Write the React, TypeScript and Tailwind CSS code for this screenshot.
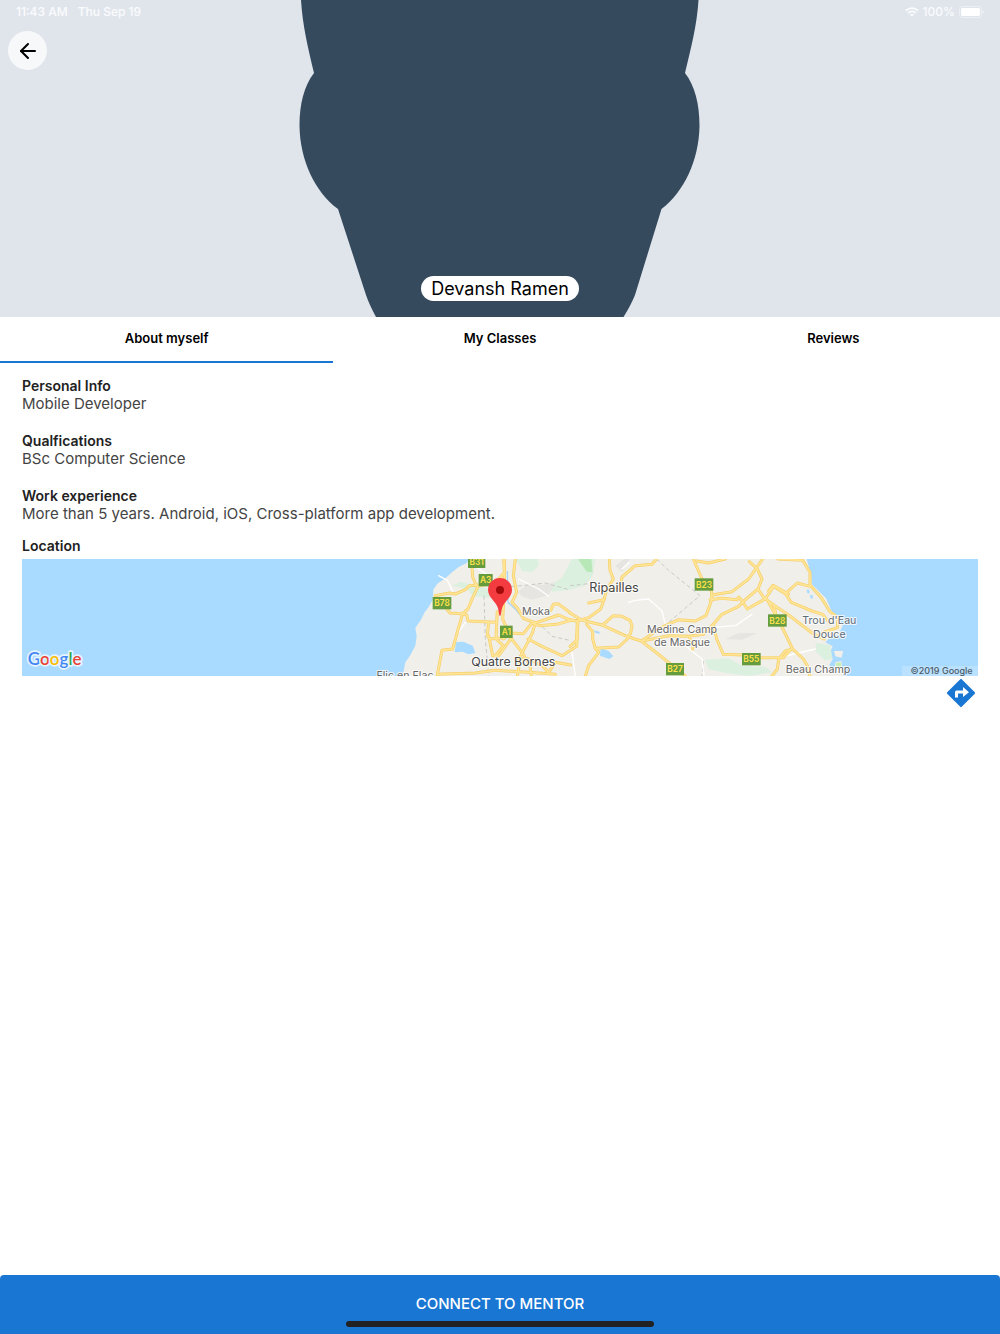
import { useState } from 'react';
import { ArrowLeft } from 'lucide-react';

const TABS = ['About myself', 'My Classes', 'Reviews'];

const INFO = [
    { title: 'Personal Info', text: 'Mobile Developer' },
    { title: 'Qualfications', text: 'BSc Computer Science' },
    { title: 'Work experience', text: 'More than 5 years. Android, iOS, Cross-platform app development.' },
];

// Map coordinates are three units to the pixel
const ROADS = [
    // west coast
    'M1350 24 L1352 54 L1362 78 L1368 82 L1412 71 L1428 62 L1448 40 L1446 0',
    'M1240 110 L1282 102 L1300 105 L1330 92 L1342 80 L1368 78',
    'M1256 128 L1284 162 L1322 164 L1338 150 L1352 116 L1368 82',
    'M1322 164 L1334 168 L1338 186 L1424 190 L1426 158',
    'M1322 164 L1308 212 L1292 270 L1260 274 L1246 348',
    'M1400 190 L1396 230 L1404 240 L1444 236',
    'M1400 230 L1412 290 L1430 290 L1466 240',
    'M1446 0 L1448 80 L1442 180 L1466 236 L1500 280 L1524 320 L1528 351',
    'M1424 190 L1422 240 L1444 260 L1420 290',
    'M1480 0 L1474 50 L1484 100 L1470 130 L1488 150 L1504 178 L1540 192 L1610 168 L1646 184 L1670 186',
    'M1444 240 L1466 222 L1504 224 L1530 192 L1552 200 L1604 196 L1646 184',
    'M1540 190 L1532 220 L1514 256 L1496 290 L1486 351',
    'M1480 300 L1520 300 L1560 320 L1580 340 L1600 310 L1646 318',
    'M1586 154 L1594 136 L1608 134 L1646 162',
    'M1518 240 L1560 262 L1620 290 L1664 262 L1668 186',
    'M1246 346 L1360 342 L1420 334 L1520 340 L1600 346',
    // centre
    'M1762 0 L1764 34 L1774 60 L1754 92 L1746 122 L1700 132',
    'M1904 0 L1890 16 L1840 20 L1800 54 L1796 84 L1766 94',
    'M1746 122 L1736 150 L1700 176 L1664 186 L1644 182',
    'M1644 162 L1680 184 L1740 198 L1770 212 L1810 230 L1838 240 L1858 246 L1912 288 L1990 351',
    'M1742 198 L1774 170 L1800 172 L1824 184 L1830 200 L1826 222 L1816 240 L1790 264 L1720 268 L1712 240 L1712 218 L1694 196',
    'M1666 186 L1664 244 L1644 262',
    'M1720 268 L1730 280 L1700 320 L1690 351',
    'M1864 242 L1920 204 L1970 182 L2020 186 L2052 170 L2070 120 L2068 96 L2040 60 L2014 0',
    'M1860 246 L1940 230 L2000 232 L2044 226 L2074 196 L2100 166 L2150 142 L2170 122 L2208 90 L2220 60 L2206 30 L2182 8',
    'M2070 108 L2130 98 L2180 60 L2204 26 L2222 0',
    'M2024 6 L2060 12 L2110 0',
    'M2064 122 L2100 118 L2146 122 L2150 114 L2160 126 L2176 150 L2204 134 L2230 120 L2256 80 L2300 106',
    'M2208 90 L2224 114 L2256 140 L2262 170',
    'M2074 196 L2084 240 L2104 286 L2164 288 L2200 296 L2284 296 L2300 278 L2308 270',
    'M2002 236 L2014 256 L2012 270',
    // east coast
    'M2268 0 L2342 4 L2364 40 L2364 78 L2398 116 L2424 158 L2448 176 L2446 206 L2400 222',
    'M2364 82 L2326 72 L2290 104 L2252 80 L2240 96',
    'M2290 104 L2308 130 L2370 156 L2402 166 L2424 194',
    'M2240 128 L2300 168 L2370 222 L2406 240',
    'M2240 130 L2280 204 L2312 270 L2344 300 L2356 320 L2364 351',
    'M2312 270 L2290 276 L2270 300 L2266 330 L2250 351',
];

const MINOR_ROADS = [
    'M1250 50 L1276 64 L1292 96',
    'M1356 20 L1400 50 L1420 70',
    'M1300 232 L1330 190',
    'M1490 60 L1550 90 L1580 112',
    'M1820 130 L1840 124 L1880 120 L1920 156 L1930 196',
    'M1800 30 L1822 10',
    'M1920 200 L1960 224',
    'M2084 204 L2140 200 L2190 166',
    'M1990 260 L2040 300 L2046 351',
    'M2252 300 L2380 270',
    'M1650 280 L1660 351',
];

const BADGES = [
    { label: 'B31', x: 1338, y: -10, w: 52 },
    { label: 'A3', x: 1370, y: 45, w: 42 },
    { label: 'B78', x: 1232, y: 114, w: 56 },
    { label: 'A1', x: 1434, y: 200, w: 38 },
    { label: 'B23', x: 2018, y: 58, w: 56 },
    { label: 'B28', x: 2238, y: 166, w: 56 },
    { label: 'B55', x: 2160, y: 282, w: 56 },
    { label: 'B27', x: 1932, y: 312, w: 54 },
];

const PLACES = [
    { label: 'Ripailles', x: 1776, y: 98, size: 38, color: '#444444' },
    { label: 'Quatre Bornes', x: 1474, y: 322, size: 37, color: '#444444' },
    { label: 'Moka', x: 1542, y: 168, size: 32, color: '#666666' },
    { label: 'Flic en Flac', x: 1149, y: 359, size: 32, color: '#666666' },
    { label: 'Medine Camp', x: 1980, y: 222, size: 32, color: '#666666' },
    { label: 'de Masque', x: 1980, y: 262, size: 32, color: '#666666' },
    { label: "Trou d'Eau", x: 2422, y: 196, size: 32, color: '#5f6b76' },
    { label: 'Douce', x: 2422, y: 236, size: 32, color: '#5f6b76' },
    { label: 'Beau Champ', x: 2388, y: 342, size: 32, color: '#666666' },
];

function StatusBar() {
    return (
        <div className="relative flex items-center justify-between px-4 h-6 text-[12px] font-medium text-white/85">
            <div className="flex gap-[10px]">
                <span>11:43 AM</span>
                <span>Thu Sep 19</span>
            </div>
            <div className="flex items-center gap-1">
                <svg className="w-[14px] h-[10px]" viewBox="0 0 14 10" fill="none" stroke="currentColor" strokeWidth="1.8">
                    <path d="M0.8 3.6a9 9 0 0 1 12.4 0" />
                    <path d="M3.1 6a5.6 5.6 0 0 1 7.8 0" />
                    <path d="M7 9.8L4.9 7.7a3 3 0 0 1 4.2 0z" fill="currentColor" stroke="none" />
                </svg>
                <span>100%</span>
                <svg className="w-[25px] h-3" viewBox="0 0 25 12">
                    <rect x="0.5" y="0.5" width="22" height="11" rx="3" fill="none" stroke="white" strokeOpacity="0.4" />
                    <rect x="2" y="2" width="19" height="8" rx="1.6" fill="white" />
                    <path d="M23.5 4v4a2.2 2.2 0 0 0 0-4z" fill="white" fillOpacity="0.5" />
                </svg>
            </div>
        </div>
    );
}

function Header() {
    return (
        <header className="relative h-[317px] shrink-0 flex flex-col bg-[#e0e5ec] overflow-hidden">
            {/* Avatar silhouette */}
            <svg className="absolute inset-0 w-full h-full" viewBox="0 0 1000 317" preserveAspectRatio="xMidYMid slice">
                <path
                    d="M301 0 C302.500 25 308 48 314 73 C304 86 299.500 104 299.500 126 C300 160 315 192 338 209 L366 295 Q369 304 376 317 L623.500 317 Q631 305 635 295 L661.500 209 C684 192 699 160 699.500 126 C699.500 104 695 86 685 73 C691 48 697 25 698.500 0 Z"
                    fill="#364a5e"
                />
            </svg>
            <StatusBar />
            <button
                aria-label="Back"
                className="relative mt-[7px] ml-2 size-[39px] rounded-full bg-[#f7f8fa] flex items-center justify-center text-black"
            >
                <ArrowLeft size={24} />
            </button>
            <h1 className="relative mt-auto mb-4 self-center rounded-full bg-white px-[10px] text-[18px] leading-[25px] text-black">
                Devansh Ramen
            </h1>
        </header>
    );
}

function LocationMap() {
    return (
        <svg
            className="block w-full h-[117px] bg-[#a9daff]"
            viewBox="0 0 2868 351"
            preserveAspectRatio="xMidYMid slice"
            role="img"
            aria-label="Map"
        >
            {/* Land */}
            <path
                d="M1342 0 L1334 12 L1310 24 L1290 40 L1270 58 L1246 74 L1234 92 L1232 122 L1220 144 L1208 160 L1196 184 L1180 206 L1184 232 L1180 260 L1164 290 L1150 310 L1142 351 L2440 351 L2430 335 L2422 318 L2432 300 L2424 280 L2432 262 L2410 250 L2420 240 L2450 226 L2462 200 L2450 172 L2430 158 L2412 118 L2370 76 L2368 50 L2354 0 Z"
                fill="#f0efea"
            />
            <path d="M2436 276 L2464 276 L2458 296 L2440 292Z M2440 310 L2458 306 L2464 351 L2436 351Z" fill="#f0efea" />

            {/* Hills and parks */}
            <g fill="#dcf0e0">
                <path d="M1288 80 L1316 68 L1364 80 L1404 90 L1412 118 L1380 114 L1352 112 L1336 90 Z" />
                <path d="M1476 0 L1548 0 L1550 20 L1530 40 L1500 36 L1490 14 Z" />
                <path d="M1580 80 L1620 56 L1650 0 L1720 0 L1712 50 L1686 80 L1644 92 L1590 98 Z" />
                <path d="M2048 302 L2120 298 L2160 320 L2230 324 L2250 340 L2180 351 L2100 340 L2060 330 Z" />
                <path d="M2382 252 L2424 258 L2432 300 L2408 304 L2380 276 Z" />
            </g>
            <path d="M1668 0 L1708 0 L1712 40 L1694 38 Z" fill="#b9e8b8" />
            <path d="M2442 312 L2456 310 L2460 328 L2442 328 Z" fill="#c5ecb4" />
            <g fill="#e6e5e1">
                <path d="M1488 98 L1520 74 L1560 78 L1600 70 L1580 108 L1530 122 L1500 112 Z" />
                <path d="M2110 240 L2150 222 L2206 222 L2160 242 Z" />
                <path d="M1780 20 L1806 0 L1824 0 L1800 40 Z" />
            </g>

            {/* Lakes and rivers */}
            <g fill="#a9daff">
                <path d="M1302 250 L1324 248 L1352 260 L1360 282 L1340 286 L1322 278 L1298 280 Z" />
                <path d="M1736 268 L1760 276 L1774 292 L1762 300 L1734 290 Z" />
                <path d="M1716 214 L1732 218 L1734 224 L1720 222 Z" />
                <path d="M2354 92 L2362 92 L2362 104 L2356 102 Z M2364 108 L2372 108 L2372 120 L2366 118 Z" />
            </g>
            <path d="M1456 36 L1458 130 L1480 150 L1506 180" fill="none" stroke="#a9d5f5" strokeWidth="4" />

            {/* District borders */}
            <g fill="none" stroke="#c9c9c7" strokeWidth="3" strokeDasharray="12 8">
                <path d="M1386 110 L1390 240 L1400 351" />
                <path d="M1448 84 L1500 80 L1570 72 L1640 92" />
                <path d="M1506 180 L1560 202 L1590 232 L1644 244" />
                <path d="M1904 0 L1940 34 L2034 110 L1940 190" />
                <path d="M2044 306 L2040 351" />
                <path d="M1644 80 L1700 74" />
            </g>

            {/* Roads */}
            <g fill="none" strokeLinejoin="round" strokeLinecap="round">
                {MINOR_ROADS.map((d) => (
                    <path key={d} d={d} stroke="#ffffff" strokeWidth="4" />
                ))}
                {ROADS.map((d) => (
                    <path key={d} d={d} stroke="#f7cf6b" strokeWidth="9" />
                ))}
                {ROADS.map((d) => (
                    <path key={d} d={d} stroke="#ffe595" strokeWidth="5" />
                ))}
            </g>

            <g fontFamily="Inter, sans-serif" textAnchor="middle">
                {BADGES.map((b) => (
                    <g key={b.label}>
                        <rect x={b.x} y={b.y} width={b.w} height="37" fill="#659c3d" />
                        <text x={b.x + b.w / 2} y={b.y + 28} fontSize="25" fontWeight="600" fill="#ffe14d">
                            {b.label}
                        </text>
                    </g>
                ))}
                {PLACES.map((p) => (
                    <text
                        key={p.label}
                        x={p.x}
                        y={p.y}
                        fontSize={p.size}
                        fill={p.color}
                        stroke="#ffffff"
                        strokeWidth="6"
                        strokeOpacity="0.8"
                        strokeLinejoin="round"
                        paintOrder="stroke"
                    >
                        {p.label}
                    </text>
                ))}
            </g>

            {/* Pin */}
            <path d="M1434 171 C1431 171 1431 160 1428 148 C1422 126 1398 116 1398 92 A36 35 0 0 1 1470 92 C1470 116 1446 126 1440 148 C1437 160 1437 171 1434 171Z" fill="#f43b40" />
            <circle cx="1434" cy="93" r="12" fill="#a30b0b" />

            <text
                x="17"
                y="319"
                fontFamily="Lato, sans-serif"
                fontSize="51"
                fontWeight="600"
                stroke="#e6f4ff"
                strokeWidth="10"
                strokeLinejoin="round"
                paintOrder="stroke"
            >
                <tspan fill="#4285f4">G</tspan>
                <tspan fill="#ea4335">o</tspan>
                <tspan fill="#fbbc05">o</tspan>
                <tspan fill="#4285f4">g</tspan>
                <tspan fill="#34a853">l</tspan>
                <tspan fill="#ea4335">e</tspan>
            </text>
            <rect x="2640" y="321" width="228" height="30" fill="#ffffff" fillOpacity="0.2" />
            <text x="2852" y="345" textAnchor="end" fontFamily="Inter, sans-serif" fontSize="27" fontWeight="500" fill="#4d5b66">
                ©2019 Google
            </text>
        </svg>
    );
}

function DirectionsIcon() {
    return (
        <svg className="size-[34px]" viewBox="0 0 34 34" fill="currentColor">
            <path d="M16.300 3.200 L3.200 16.300 Q2.500 17 3.200 17.700 L16.300 30.800 Q17 31.500 17.700 30.800 L30.800 17.700 Q31.500 17 30.800 16.300 L17.700 3.200 Q17 2.500 16.300 3.200Z" />
            <path d="M11 21.500 V16 Q11 14.500 12.500 14.500 H19 V11 L25 16.200 L19 21 V17.500 H14 V21.500Z" fill="white" />
        </svg>
    );
}

export default function App() {
    const [active, setActive] = useState(TABS[0]);

    return (
        <div className="min-h-screen flex flex-col bg-white font-['Inter',sans-serif]">
            <Header />

            {/* Tabs */}
            <nav className="grid grid-cols-3">
                {TABS.map((tab) => (
                    <button
                        key={tab}
                        onClick={() => setActive(tab)}
                        className={`h-[46px] border-b-2 text-[13px] font-semibold text-black ${
                            active === tab ? 'border-[#1976d2]' : 'border-transparent'
                        }`}
                    >
                        {tab}
                    </button>
                ))}
            </nav>

            <main className="flex-1 px-[22px] pt-[14px] leading-[18px] text-[14px] text-[#222222]">
                <div className="flex flex-col gap-[19px] mb-[14px]">
                    {INFO.map((item) => (
                        <section key={item.title}>
                            <h2 className="font-semibold">{item.title}</h2>
                            <p className="text-[15px] leading-[18px] text-[#444444]">{item.text}</p>
                        </section>
                    ))}
                </div>
                <section>
                    <h2 className="font-semibold mb-1">Location</h2>
                    <LocationMap />
                    <div className="flex justify-end">
                        <button aria-label="Directions" className="text-[#1976d2]">
                            <DirectionsIcon />
                        </button>
                    </div>
                </section>
            </main>

            <button className="relative h-[59px] shrink-0 rounded-t-sm bg-[#1976d2] text-[15px] font-medium text-white">
                CONNECT TO MENTOR
                {/* Home indicator */}
                <span className="absolute bottom-[7px] left-1/2 h-[6px] w-[308px] -translate-x-1/2 rounded-full bg-[#222222]" />
            </button>
        </div>
    );
}
